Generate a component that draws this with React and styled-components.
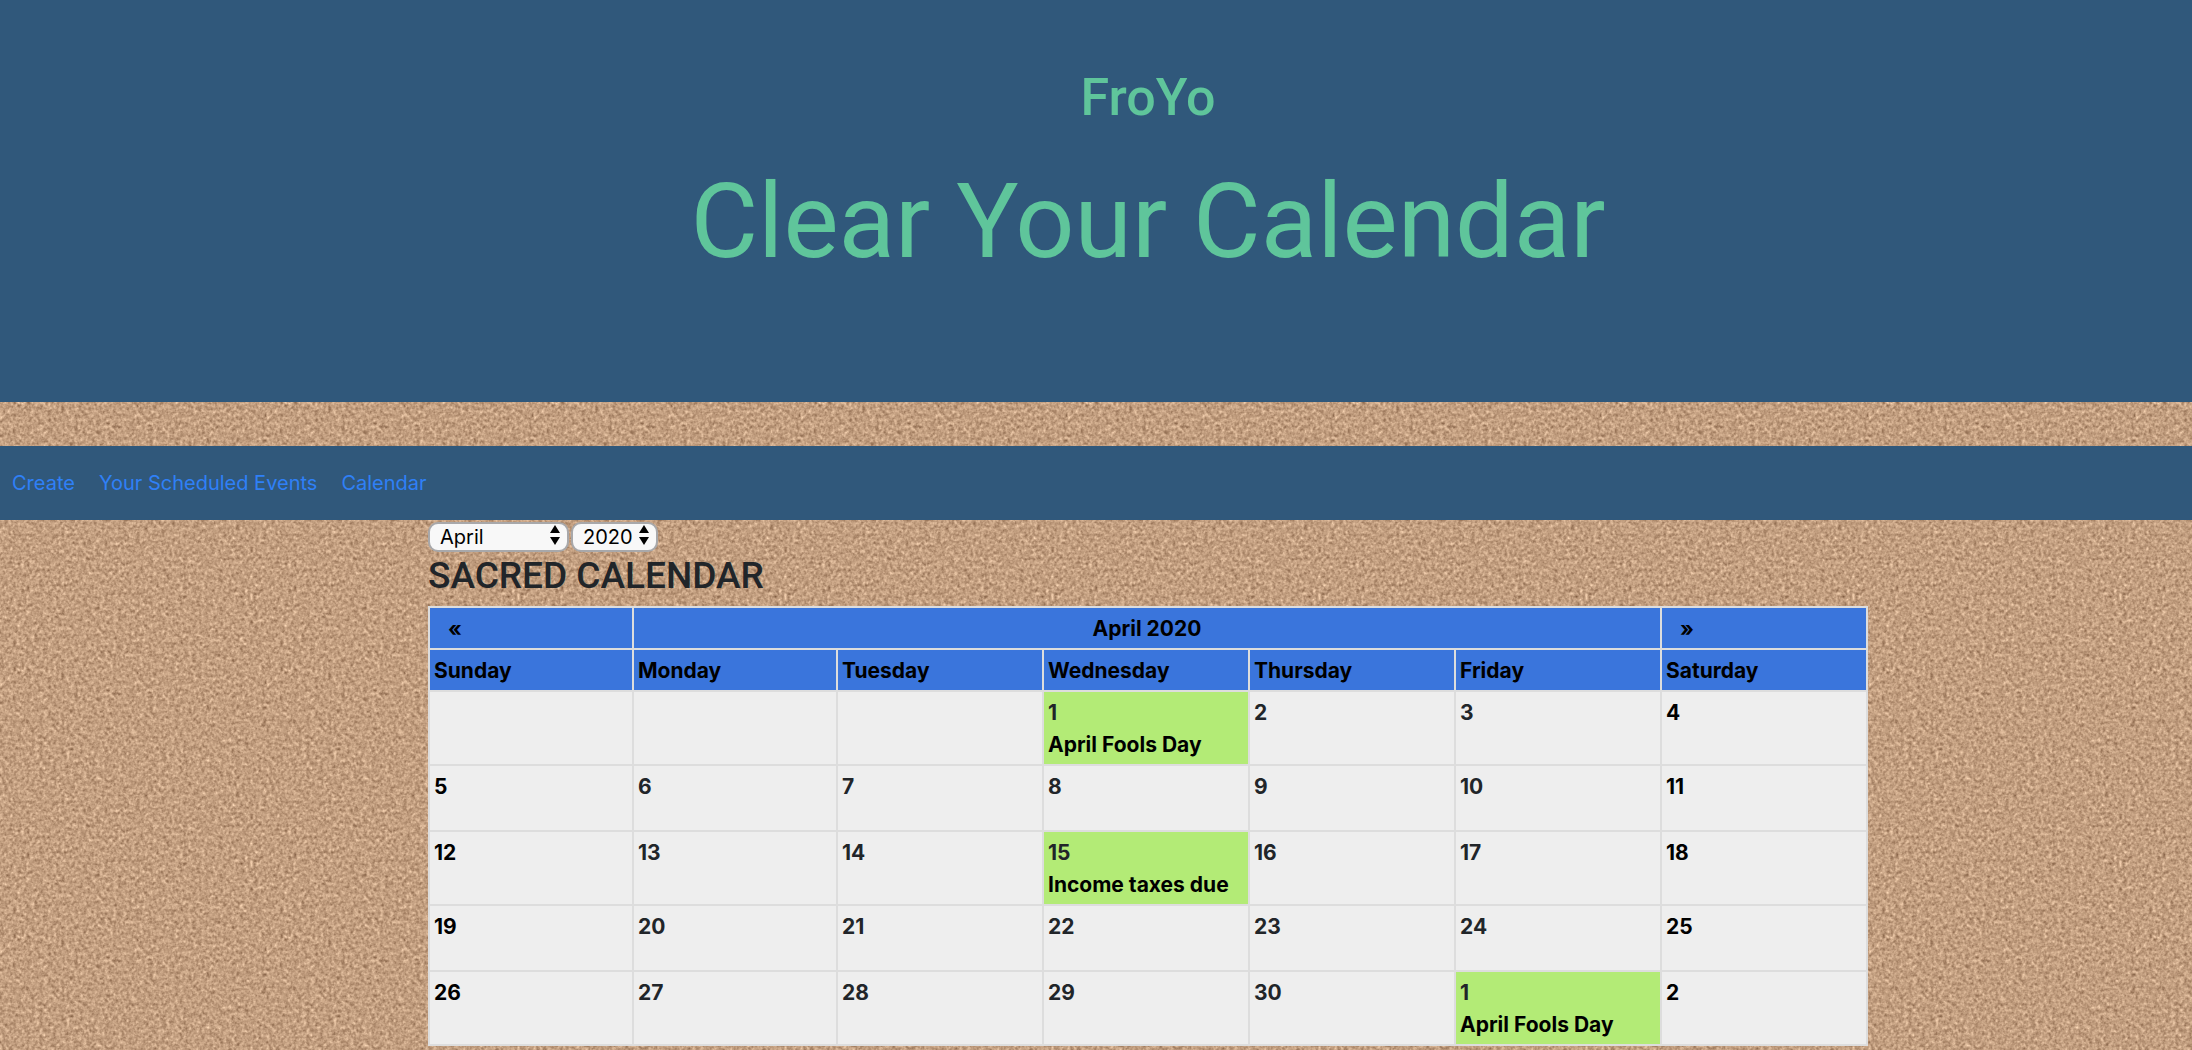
import React, { useState } from "react";
import styled, { createGlobalStyle, css } from "styled-components";

const corkTile = `<svg xmlns="http://www.w3.org/2000/svg" width="267" height="267"><filter id="c" x="0" y="0" width="100%" height="100%" color-interpolation-filters="sRGB"><feTurbulence type="fractalNoise" baseFrequency="0.23 0.26" numOctaves="2" seed="8" stitchTiles="stitch" result="coarse"/><feTurbulence type="fractalNoise" baseFrequency="0.37 0.34" numOctaves="2" seed="31" stitchTiles="stitch" result="fine"/><feColorMatrix in="coarse" values="0.5 0.5 0 0 0 0.5 0.5 0 0 0 0.5 0.5 0 0 0 0 0 0 0 1" result="a"/><feColorMatrix in="fine" values="0.5 0.5 0 0 0 0.5 0.5 0 0 0 0.5 0.5 0 0 0 0 0 0 0 1" result="b"/><feComposite in="a" in2="b" operator="arithmetic" k2="0.5" k3="0.5"/><feColorMatrix values="0.95 0 0 0 0.285 0.95 0 0 0 0.145 0.9 0 0 0 0.05 0 0 0 0 1"/></filter><rect width="267" height="267" filter="url(#c)"/></svg>`;

const GlobalStyle = createGlobalStyle`
  * { box-sizing: border-box; }
  body {
    margin: 0;
    color: #212529;
    font: 400 21px/32px Inter, "Liberation Sans", sans-serif;
    background: #c29c7b url("data:image/svg+xml,${encodeURIComponent(corkTile)}");
  }
`;

const Masthead = styled.header`
  padding: 66px 0 114px 104px;
  margin-bottom: 44px;
  text-align: center;
  color: #5fc59b;
  background: #30587b;
`;

const Brand = styled.h1`
  margin: 0 0 26px;
  font-family: Roboto, sans-serif;
  font-size: 52px;
  font-weight: 500;
  line-height: 64px;
`;

const Tagline = styled.p`
  margin: 0;
  font-family: Roboto, sans-serif;
  font-size: 104px;
  line-height: 132px;
`;

const NavBar = styled.nav`
  display: flex;
  gap: 24px;
  padding: 21px 12px;
  font-size: 20px;
  background: #30587b;
`;

const NavLink = styled.a`
  color: #2f80f7;
  text-decoration: none;
`;

const Main = styled.main`
  padding: 2px 0 4px 104px;
`;

const CalendarSection = styled.section`
  max-width: 1440px;
  margin: 0 auto;
`;

const Filters = styled.div`
  display: flex;
  gap: 2px;
`;

const SelectBox = styled.label`
  position: relative;
  display: block;
`;

const Select = styled.select`
  display: block;
  width: ${(p) => p.$width};
  height: 30px;
  padding: 0 10px;
  border: 2px solid #a8a8aa;
  border-radius: 10px;
  appearance: none;
  color: #000;
  background: #f8f8f8;
  font: inherit;
  font-size: 20px;
  line-height: 26px;
`;

const Arrows = styled.svg`
  position: absolute;
  top: 3px;
  right: 8px;
  width: 12px;
  height: 20px;
  pointer-events: none;
`;

const Title = styled.h2`
  margin: 0 0 8px;
  padding-top: 2px;
  font-family: Roboto, sans-serif;
  font-size: 37px;
  font-weight: 500;
  line-height: 44px;
  text-transform: uppercase;
`;

const Table = styled.table`
  width: 100%;
  table-layout: fixed;
  border-collapse: collapse;
  font-weight: 700;
`;

const NarrowColumn = styled.col`
  width: 204px;
`;

const cell = css`
  padding: 5px 4px 3px;
  border: 2px solid #ddd;
  text-align: left;
  vertical-align: top;
`;

const HeadCell = styled.th`
  ${cell}
  height: 42px;
  color: #000;
  background: #3a75dc;
  text-align: ${(p) => p.$align || "left"};
`;

const Step = styled.button`
  display: block;
  padding: 0 14px;
  border: 0;
  color: inherit;
  background: none;
  font: inherit;
`;

const DayCell = styled.td`
  ${cell}
  height: 66px;
  color: ${(p) => (p.$weekend ? "#000" : "inherit")};
  background: ${(p) => (p.$holiday ? "#b3eb76" : "#eee")};
`;

const Holiday = styled.div`
  color: #000;
`;

const months = ["January", "February", "March", "April", "May", "June", "July", "August", "September", "October", "November", "December"];
const days = ["Sunday", "Monday", "Tuesday", "Wednesday", "Thursday", "Friday", "Saturday"];
const weeks = [
  ["", "", "", 1, 2, 3, 4],
  [5, 6, 7, 8, 9, 10, 11],
  [12, 13, 14, 15, 16, 17, 18],
  [19, 20, 21, 22, 23, 24, 25],
  [26, 27, 28, 29, 30, 1, 2],
];
const holidays = { "0-3": "April Fools Day", "2-3": "Income taxes due", "4-5": "April Fools Day" };

function Picker({ name, width, options, initial }) {
  const [value, setValue] = useState(initial);
  return (
    <SelectBox>
      <Select aria-label={name} $width={width} value={value} onChange={(e) => setValue(e.target.value)}>
        {options.map((o) => <option key={o}>{o}</option>)}
      </Select>
      <Arrows viewBox="0 0 12 20" aria-hidden="true">
        <path d="M6 0l5 8H1zM6 20l5-8H1z" />
      </Arrows>
    </SelectBox>
  );
}

export default function App() {
  return (
    <>
      <GlobalStyle />
      <Masthead>
        <Brand>FroYo</Brand>
        <Tagline>Clear Your Calendar</Tagline>
      </Masthead>
      <NavBar>
        <NavLink href="#create">Create</NavLink>
        <NavLink href="#events">Your Scheduled Events</NavLink>
        <NavLink href="#calendar">Calendar</NavLink>
      </NavBar>
      <Main>
        <CalendarSection>
          <Filters>
            <Picker name="Month" width="141px" options={months} initial="April" />
            <Picker name="Year" width="87px" options={["2019", "2020", "2021"]} initial="2020" />
          </Filters>
          <Title>Sacred Calendar</Title>
          <Table>
            <colgroup>
              <NarrowColumn />
              <NarrowColumn />
              <col span={5} />
            </colgroup>
            <thead>
              <tr>
                <HeadCell><Step aria-label="Previous month">«</Step></HeadCell>
                <HeadCell colSpan={5} $align="center">April 2020</HeadCell>
                <HeadCell><Step aria-label="Next month">»</Step></HeadCell>
              </tr>
              <tr>{days.map((d) => <HeadCell key={d} scope="col">{d}</HeadCell>)}</tr>
            </thead>
            <tbody>
              {weeks.map((week, w) => (
                <tr key={w}>
                  {week.map((day, d) => {
                    const holiday = holidays[`${w}-${d}`];
                    return (
                      <DayCell key={d} $weekend={d === 0 || d === 6} $holiday={Boolean(holiday)}>
                        {day}
                        {holiday && <Holiday>{holiday}</Holiday>}
                      </DayCell>
                    );
                  })}
                </tr>
              ))}
            </tbody>
          </Table>
        </CalendarSection>
      </Main>
    </>
  );
}
